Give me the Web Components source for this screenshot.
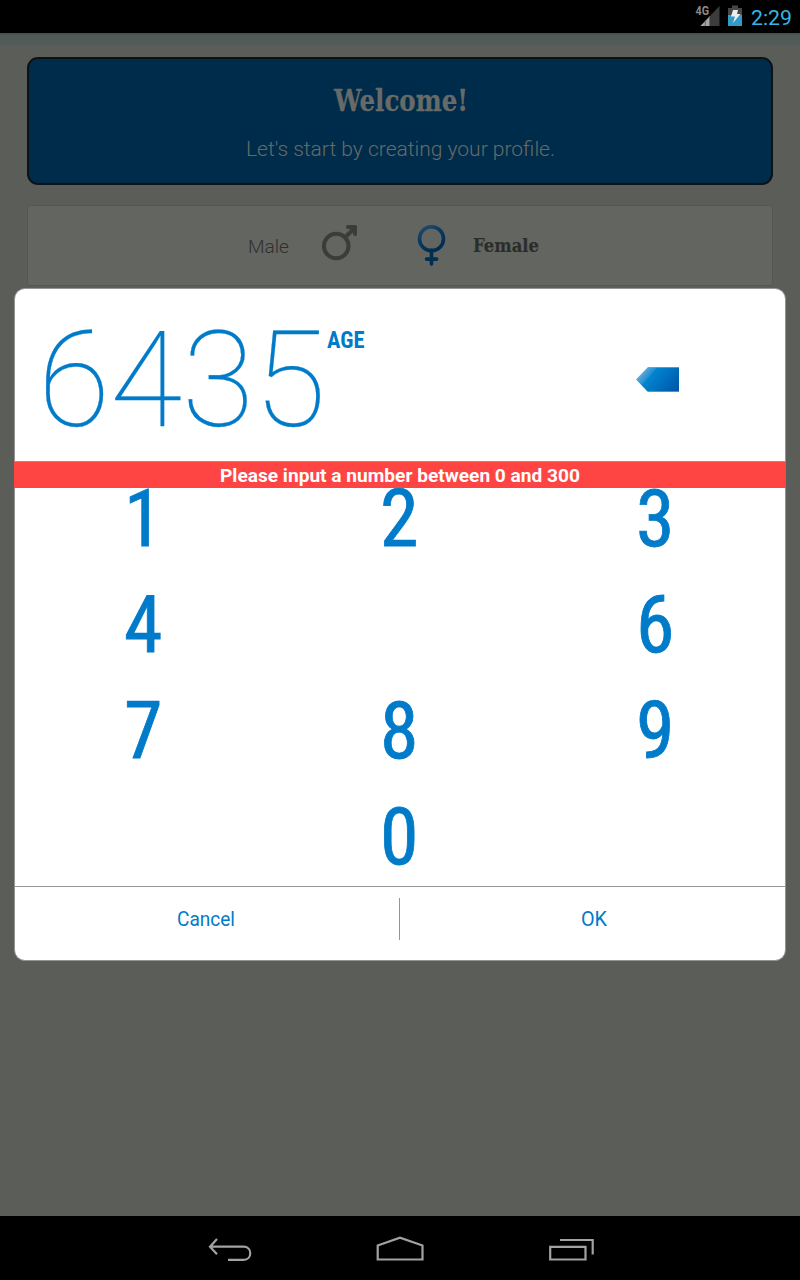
<!DOCTYPE html>
<html lang="en">
<head>
<meta charset="utf-8">
<title>Profile</title>
<style>
html,body{margin:0;height:100%;background:#000;overflow:hidden}
body{font-family:Roboto,"Liberation Sans",sans-serif}
</style>
</head>
<body>
<profile-app></profile-app>
<script>
const define = (name, html, setup) => {
  const t = document.createElement('template');
  t.innerHTML = html;
  customElements.define(name, class extends HTMLElement {
    connectedCallback() {
      if (this.shadowRoot) return;
      this.attachShadow({mode: 'open'}).append(t.content.cloneNode(true));
      if (setup) setup(this, this.shadowRoot);
    }
  });
};

/* A single line of text condensed or stretched to the width in its "w" attribute. */
define('fit-text', `<style>
:host{display:inline-block;white-space:nowrap;text-align:left;flex:none}
span{display:inline-block;transform-origin:0 50%}
</style><span><slot></slot></span>`, (host, root) => {
  const span = root.querySelector('span');
  const w = parseFloat(host.getAttribute('w'));
  host.style.width = w + 'px';
  span.style.transform = 'scaleX(' + w / span.getBoundingClientRect().width + ')';
});

define('status-bar', `<style>
:host{display:flex;height:33px;background:#000;align-items:flex-start;justify-content:flex-end;padding-right:8px;box-sizing:border-box}
svg{display:block}
fit-text{font-size:21px;line-height:37px;color:#33b5e5;margin-left:8px}
</style>
<svg width="48" height="33" viewBox="695 0 48 33">
<path d="M719.5 6V26H700.5Z" fill="#3c3c3c"/><path d="M710 16V26H700.5Z" fill="#a6a6a6"/><path d="M705.3 20v6M709.5 16v10" stroke="#5a5a5a" stroke-width=".8"/>
<rect x="694" y="4" width="14" height="12" fill="#000"/>
<text x="695.5" y="15" font-size="12.5" font-weight="700" fill="#8a8a8a" textLength="13.5" lengthAdjust="spacingAndGlyphs">4G</text>
<path d="M728 8h4V5.500h6V8h4v7h-14Z" fill="#474747"/><path d="M728 15h14v11h-14Z" fill="#3399c6"/>
<path d="M733 10h5l-1 4h3.500l-7.500 9 2-6.500h-4Z" fill="#eee"/>
</svg><fit-text w="41">2:29</fit-text>`);

define('welcome-card', `<style>
:host{display:flex;flex-direction:column;align-items:center;box-sizing:border-box;height:128px;border:2px solid #0d1215;border-radius:11px;background:#002c4b;color:#686a67}
.h{font:700 29px/38px "Roboto Slab","DejaVu Serif",serif;margin:23px 0 0 2px;-webkit-text-stroke:.3px}
.s{font-size:21px;font-weight:300;line-height:26px;margin:16px 0 0 1px}
</style>
<fit-text class="h" w="134">Welcome!</fit-text><fit-text class="s" w="309">Let's start by creating your profile.</fit-text>`);

define('gender-picker', `<style>
:host{display:flex;box-sizing:border-box;height:81px;margin-top:20px;background:#636561;border:1px solid #555753;border-radius:3px;padding-left:220px;color:#30312f}
.m{font-size:19px;font-weight:300;line-height:81px}
svg{display:block;margin-left:26px}
.f{font:700 18.5px/80px "Roboto Slab","DejaVu Serif",serif;color:#2b2d2b;margin-left:27px;-webkit-text-stroke:.2px}
</style>
<fit-text class="m" w="41">Male</fit-text>
<svg width="131" height="79" viewBox="315 206 131 79">
<defs><linearGradient id="g" x1="420" y1="225" x2="436" y2="254" gradientUnits="userSpaceOnUse"><stop stop-color="#2a4c66"/><stop offset=".45" stop-color="#073963"/><stop offset="1" stop-color="#00284a"/></linearGradient></defs>
<g fill="none" stroke="#3c3d3b" stroke-width="4"><circle cx="336.200" cy="246" r="12.300"/><path d="M345 237.500L354 228.500"/><path d="M347.500 225H355.500Q357 225 357 226.500V234.500Q357 236 355 236Q353 236 353 234V231.500L350.500 229H348Q346 229 346 227Q346 225 347.500 225Z" fill="#3c3d3b" stroke="none"/></g>
<g fill="none" stroke="url(#g)" stroke-width="3.600"><circle cx="431.500" cy="238.700" r="12"/><path d="M431.500 250V264M426.500 259.100H436.700" stroke="#002d50" stroke-linecap="round"/></g>
</svg><fit-text class="f" w="66">Female</fit-text>`);

define('form-page', `<style>
:host{display:flex;flex-direction:column;flex:1;background:linear-gradient(#464f4c,#4f5a57 3px,#515b58 12px,#5b5d59 12px);padding:24px 27px 0;box-sizing:border-box}
</style><welcome-card></welcome-card><gender-picker></gender-picker>`);

define('nav-bar', `<style>
:host{display:flex;height:64px;background:#000;justify-content:center}
svg{display:block}
</style>
<svg width="420" height="64" viewBox="190 1216 420 64" fill="none" stroke="#a2a2a2" stroke-width="2.200">
<path d="M217 1239L210 1246.700L217 1254.300M210 1246.700H243.500C252.500 1246.700 252.500 1259.900 243.500 1259.900H228"/>
<path d="M377.700 1259.500V1245.500L400 1237.700L422.500 1245.500V1259.500Z"/>
<path d="M550.200 1246.800H585.500V1259.500H550.200ZM560 1240H592.700V1254.500"/>
</svg>`);

define('value-display', `<style>
:host{display:flex;height:172px;box-sizing:border-box;color:#007bc9;padding-left:23px;align-items:flex-start}
.n{font-size:133px;font-weight:100;line-height:156px;margin-top:14px;-webkit-text-stroke:.25px}
.u{font:700 24px/28px "Roboto Condensed",Roboto,sans-serif;margin-top:37px;margin-left:1px}
svg{display:block;margin:78px 0 0 auto;padding-right:106px}
</style>
<fit-text class="n" w="288">6435</fit-text><fit-text class="u" w="37.5">AGE</fit-text>
<svg width="43" height="25" viewBox="0 0 43 25"><defs><linearGradient id="b" x1="5" y1="0" x2="38" y2="28" gradientUnits="userSpaceOnUse"><stop stop-color="#7dbce6"/><stop offset=".28" stop-color="#238dd0"/><stop offset=".3" stop-color="#0085d0"/><stop offset="1" stop-color="#0055a9"/></linearGradient></defs>
<path d="M0 12.500L12 0H43V25H12Z" fill="url(#b)"/><path d="M12 .5H43M12 24.500H43" stroke="#65b0df" opacity=".7"/></svg>`);

define('key-pad', `<style>
:host{display:grid;grid-template-columns:repeat(3,minmax(0,1fr));grid-auto-rows:106px;color:#007bc9}
div{display:flex;justify-content:center;box-sizing:border-box;font:400 79.5px/105px "Roboto Condensed",Roboto,sans-serif;-webkit-text-stroke:.8px;padding-top:4px;padding-right:1px;height:106px}
div:nth-child(3n+1){padding-right:3px}
</style>`, (host, root) => {
  for (const k of ['1','2','3','4','','6','7','8','9','','0','']) {
    const d = document.createElement('div');
    if (k) { const f = document.createElement('fit-text'); f.setAttribute('w', '38.5'); f.textContent = k; d.append(f); }
    root.append(d);
  }
});

define('error-banner', `<style>
:host{display:flex;justify-content:center;height:26px;background:#ff4444;color:#fff;font-size:19px;font-weight:700;line-height:27px}
</style><fit-text w="360"><slot></slot></fit-text>`);

define('dialog-actions', `<style>
:host{display:flex;height:73px;border-top:1px solid #959595;box-sizing:border-box;color:#007bc9;font-size:19.5px;line-height:66px}
div{text-align:center;flex:1}
i{width:1px;height:42px;background:#959595;margin-top:11px}
.c{flex:none;width:384px;box-sizing:border-box;padding-right:2px}.o{padding-left:3px}
</style><div class="c"><fit-text w="58">Cancel</fit-text></div><i></i><div class="o"><fit-text w="26">OK</fit-text></div>`);

define('age-dialog', `<style>
:host{position:absolute;left:14px;top:288px;width:772px;height:673px;box-sizing:border-box;border:1px solid #959595;border-radius:11px;background:#fff}
.keys{position:relative;border-top:1px solid #959595}
error-banner{position:absolute;left:-1px;right:-1px;top:0}
</style>
<value-display></value-display>
<div class="keys"><key-pad></key-pad><error-banner>Please input a number between 0 and 300</error-banner></div>
<dialog-actions></dialog-actions>`);

define('profile-app', `<style>
:host{display:flex;flex-direction:column;position:relative;width:800px;height:1280px}
</style><status-bar></status-bar><form-page></form-page><nav-bar></nav-bar><age-dialog></age-dialog>`);
</script>
</body>
</html>
